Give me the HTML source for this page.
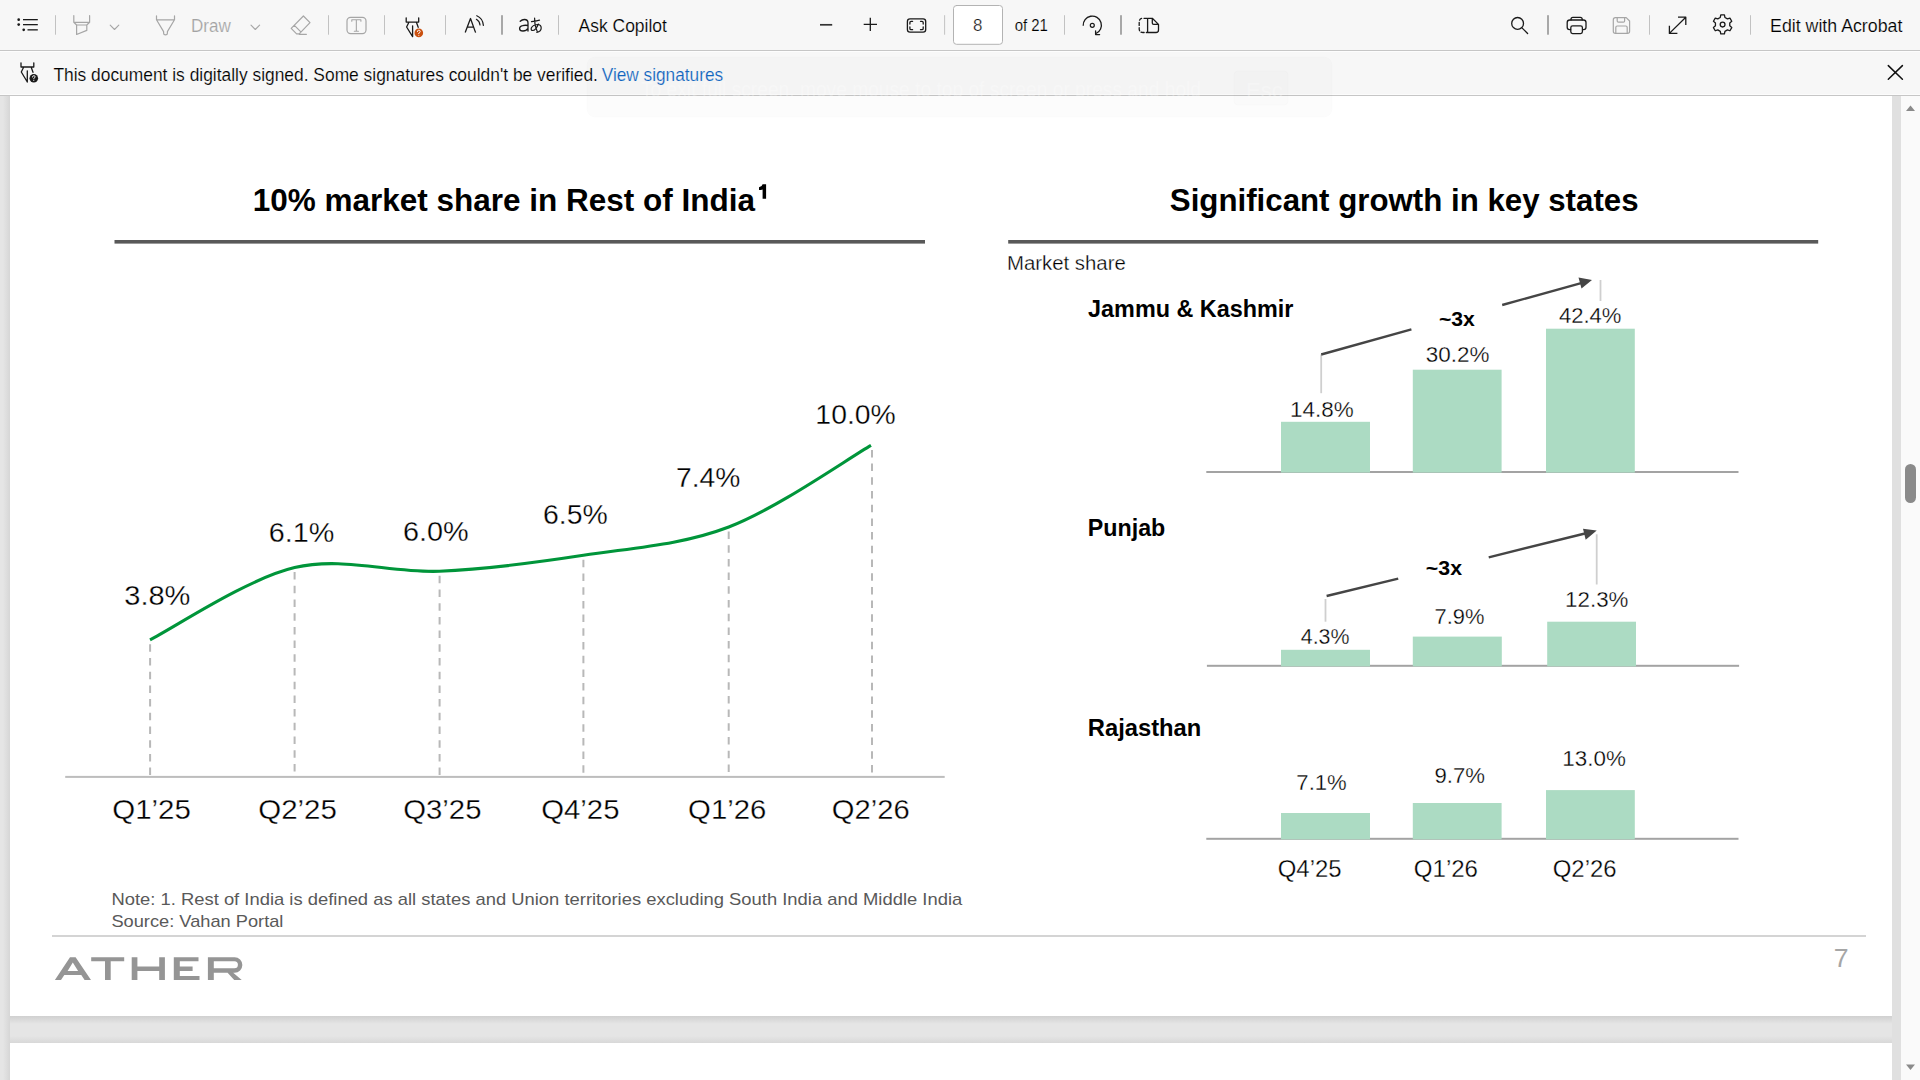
<!DOCTYPE html>
<html><head><meta charset="utf-8"><style>
html,body{margin:0;padding:0;width:1920px;height:1080px;overflow:hidden;background:#e5e5e5;}
svg{position:absolute;left:0;top:0;font-family:"Liberation Sans",sans-serif;}
</style></head><body>
<svg width="1920" height="1080" viewBox="0 0 1920 1080">
<!-- viewer background -->
<defs>
<linearGradient id="shB" x1="0" y1="0" x2="0" y2="1"><stop offset="0" stop-color="#d0d0d0"/><stop offset="1" stop-color="#e5e5e5"/></linearGradient>
<linearGradient id="shL" x1="1" y1="0" x2="0" y2="0"><stop offset="0" stop-color="#d6d6d6"/><stop offset="1" stop-color="#e5e5e5"/></linearGradient>
<linearGradient id="shR" x1="0" y1="0" x2="1" y2="0"><stop offset="0" stop-color="#d6d6d6"/><stop offset="1" stop-color="#e5e5e5"/></linearGradient>
<linearGradient id="shT" x1="0" y1="1" x2="0" y2="0"><stop offset="0" stop-color="#d8d8d8"/><stop offset="1" stop-color="#e5e5e5"/></linearGradient>
</defs>
<rect x="0" y="0" width="1920" height="1080" fill="#e5e5e5"/>
<rect x="3" y="96" width="7" height="984" fill="url(#shL)"/>
<rect x="1892" y="96" width="9" height="984" fill="#e0e0e0"/>
<rect x="10" y="1016" width="1882" height="8" fill="url(#shB)"/>
<rect x="10" y="1036" width="1882" height="7" fill="url(#shT)"/>
<!-- page 1 -->
<rect x="10" y="96" width="1882" height="920" fill="#fff"/>
<!-- shadow under page -->
<rect x="10" y="1043" width="1882" height="40" fill="#fff"/>
<!-- scrollbar -->
<rect x="1901" y="96" width="19" height="984" fill="#fafafa"/>
<rect x="1905" y="464" width="11" height="39" rx="5.5" fill="#8a8a8a"/>
<path d="M1906,111 L1910.5,105.5 L1915,111 Z" fill="#8a8a8a"/>
<path d="M1906,1064.5 L1910.5,1070 L1915,1064.5 Z" fill="#8a8a8a"/>

<!-- toolbar -->
<rect x="0" y="0" width="1920" height="50" fill="#f7f7f7"/>
<rect x="0" y="50" width="1920" height="1" fill="#c6c6c6"/>
<!-- notification bar -->
<rect x="0" y="51" width="1920" height="44" fill="#f7f7f7"/>
<rect x="0" y="95" width="1920" height="1" fill="#c6c6c6"/>
<rect x="0" y="51" width="1920" height="1" fill="#fdfdfd"/>
<rect x="0" y="94" width="1920" height="1" fill="#fcfcfc"/>

<g>
<rect x="587" y="57" width="745" height="60" rx="8" fill="#000" fill-opacity="0.012" stroke="#000" stroke-opacity="0.012"/>
<text x="641" y="97" font-size="22" fill="#fff" fill-opacity="0.28" textLength="560" lengthAdjust="spacingAndGlyphs">To exit full screen, move mouse to top of screen or press and hold</text>
<rect x="1234" y="71" width="54" height="34" rx="4" fill="#000" fill-opacity="0.006" stroke="#000" stroke-opacity="0.012"/>
<text x="1246" y="98" font-size="22" fill="#fff" fill-opacity="0.28">Esc</text>
</g>
<!-- slide titles and lines -->
<rect x="114.5" y="240" width="810.5" height="3.6" fill="#595959"/>
<rect x="1008.2" y="240" width="810" height="3.6" fill="#595959"/>
<!-- left chart -->
<g stroke="#b8b8b8" stroke-width="2" stroke-dasharray="7.5 6.2" fill="none"><line x1="150.1" y1="644.3" x2="150.1" y2="776" /><line x1="294.6" y1="572.1" x2="294.6" y2="776" /><line x1="439.6" y1="575.8" x2="439.6" y2="776" /><line x1="583.4" y1="559.8" x2="583.4" y2="776" /><line x1="728.7" y1="531.5" x2="728.7" y2="776" /><line x1="872" y1="449.9" x2="872" y2="776" /></g>
<rect x="65.2" y="775.9" width="879.5" height="2" fill="#bdbdbd"/>
<path d="M150,639.8 C174.1,627.8 246.4,579.0 294.6,567.6 C342.9,556.2 391.4,573.3 439.5,571.3 C487.6,569.2 535.2,562.7 583.4,555.3 C631.6,547.9 680.9,545.3 728.8,527 C776.7,508.7 847.3,459.0 871,445.4" fill="none" stroke="#00953a" stroke-width="3.1" />
<!-- bars -->
<rect x="1206.3" y="471" width="532.2" height="2" fill="#a3a3a3"/>
<rect x="1206.9" y="664.8" width="532.2" height="2" fill="#a3a3a3"/>
<rect x="1206.3" y="837.8" width="532.2" height="2" fill="#a3a3a3"/>
<g fill="#acdbc3"><rect x="1281" y="421.8" width="89" height="50.80000000000001" /><rect x="1412.8" y="369.7" width="88.79999999999995" height="102.90000000000003" /><rect x="1546" y="328.7" width="88.79999999999995" height="143.90000000000003" /><rect x="1281" y="649.8" width="89" height="16.600000000000023" /><rect x="1412.8" y="636.6" width="89.0" height="29.799999999999955" /><rect x="1547.2" y="621.7" width="88.79999999999995" height="44.69999999999993" /><rect x="1281" y="813" width="89" height="26.399999999999977" /><rect x="1412.8" y="803" width="88.79999999999995" height="36.39999999999998" /><rect x="1546" y="790.1" width="88.79999999999995" height="49.299999999999955" /></g>
<!-- arrows -->
<g stroke="#cfcfcf" stroke-width="1.8">
<line x1="1321.2" y1="354.5" x2="1321.2" y2="393.2"/>
<line x1="1600.5" y1="280" x2="1600.5" y2="301"/>
<line x1="1325.5" y1="599" x2="1325.5" y2="621.7"/>
<line x1="1596.7" y1="534.3" x2="1596.7" y2="584.5"/>
</g>
<g stroke="#454545" stroke-width="2.4" fill="none">
<line x1="1321.2" y1="354.5" x2="1411.4" y2="329.3"/>
<line x1="1502.2" y1="305" x2="1582" y2="282.8"/>
<line x1="1326.6" y1="596" x2="1398.2" y2="578.7"/>
<line x1="1488.7" y1="557.3" x2="1587" y2="533"/>
</g>
<g fill="#454545">
<path d="M1592,280 L1578.5,277.6 L1581.5,288.4 Z"/>
<path d="M1596.7,530.6 L1583,528.8 L1585.7,539.7 Z"/>
</g>
<!-- footer -->
<rect x="52" y="935" width="1814" height="2" fill="#d4d4d4"/>
<g fill="#959595"><path d="M70,957.2 H75.6 L91,980.1 H84.6 L81.3,975 H64.3 L61,980.1 H54.9 Z M72.8,962.6 L67.6,970.9 H78.1 Z" fill-rule="evenodd"/><path d="M91.2,957.2 H124.2 V961.3 H110.7 V980.1 H105 V961.3 H91.2 Z"/><path d="M131.7,957.2 H137.4 V966.4 H159.2 V957.2 H164.9 V980.1 H159.2 V970.9 H137.4 V980.1 H131.7 Z"/><path d="M173.8,957.2 H198.5 V961.3 H179.8 V966.4 H192.6 V970.9 H179.8 V976 H199.5 V980.1 H173.8 Z"/><path d="M207.9,957.2 H234.6 A7.75,7.75 0 0 1 234.6,972.7 H233.2 L241.7,980.1 H234.2 L227.6,972.7 H213.8 V980.1 H207.9 Z M213.8,961.3 V968.3 H234.4 A3.5,3.5 0 0 0 234.4,961.3 Z" fill-rule="evenodd"/></g>
<path d="M762.6,184.3 H766.1 V198.7 H762.6 V189.4 Q761,189.9 759,189.9 V187.3 Q762,187 762.6,184.3 Z" fill="#000"/>

<g fill="none" stroke-linecap="round" stroke-linejoin="round">
<!-- list icon -->
<g fill="#1a1a1a" stroke="none">
<circle cx="18.7" cy="19.7" r="1.35"/><circle cx="18.7" cy="24.6" r="1.35"/><circle cx="23.7" cy="29.8" r="1.35"/>
<rect x="23" y="19" width="14.8" height="1.3"/><rect x="23" y="24" width="14.8" height="1.3"/><rect x="27.5" y="29.2" width="10.3" height="1.3"/>
</g>
<rect x="55.0" y="15.2" width="1" height="19.5" fill="#c2c2c2"/>
<!-- highlighter (disabled) -->
<path d="M73.8,15.5 V22.3 L76.6,25 V34.5 L86.8,30.4 V25 L89.6,22.3 V15.5 M74,22.3 H89.4 M76.6,25 H86.8" stroke="#a6a6a6" stroke-width="1.2"/>
<path d="M110.2,25.2 L114.5,29.5 L118.8,25.2" stroke="#a6a6a6" stroke-width="1.1"/>
<!-- draw pen (disabled) -->
<path d="M156.5,15.8 V19.8 L163.6,31.6 V33.2 Q163.6,34.8 165.5,34.8 Q167.4,34.8 167.4,33.2 V31.6 L174.5,19.8 V15.8 M156.5,19.8 H174.5" stroke="#a6a6a6" stroke-width="1.2"/>
<path d="M251,25.2 L255.3,29.5 L259.6,25.2" stroke="#a6a6a6" stroke-width="1.1"/>
<!-- eraser (disabled) -->
<path d="M303.4,16 L310,22.6 L299.2,33.8 L296.6,33.8 L291.2,28.3 Z M294.4,25.4 L300.6,31.6 M299.2,34.3 H306.4" stroke="#a6a6a6" stroke-width="1.2"/>
<rect x="328.0" y="15.2" width="1" height="19.5" fill="#c2c2c2"/>
<!-- T box (disabled) -->
<rect x="347" y="17.4" width="19" height="16.2" rx="3.6" stroke="#a6a6a6" stroke-width="1.2"/>
<path d="M351.8,21.2 V19.8 H360.9 V21.2 M356.35,19.8 V31.2 M354.3,31.2 H358.4" stroke="#a6a6a6" stroke-width="1.1"/>
<rect x="384.0" y="15.2" width="1" height="19.5" fill="#c2c2c2"/>
<!-- signature pen with orange badge -->
<path d="M406.2,17.8 V22.1 H418.7 V17.8 M408.9,22.3 L406.6,27 L412.6,36.6 M416.4,22.3 L418.2,27.3 M412.6,25.8 V36.6" stroke="#1a1a1a" stroke-width="1.3"/>
<circle cx="418.8" cy="32.9" r="4.3" fill="#ca5010" stroke="none"/>
<path d="M417.4,31.6 Q417.4,30.2 418.8,30.2 Q420.2,30.2 420.2,31.5 Q420.2,32.4 418.8,33 V33.6" stroke="#fff" stroke-width="0.9"/>
<circle cx="418.8" cy="35.2" r="0.55" fill="#fff" stroke="none"/>
<rect x="445.0" y="15.2" width="1" height="19.5" fill="#c2c2c2"/>
<!-- read aloud -->
<path d="M465.2,32.6 L470.5,18.5 L475.6,32.6 M467.3,27.2 H473.8" stroke="#1a1a1a" stroke-width="1.3" stroke-linecap="butt"/>
<path d="M476.4,19.3 Q479.6,21.2 480,25" stroke="#1a1a1a" stroke-width="1.2"/>
<path d="M476.8,15.7 Q482.8,18.2 483.4,25.4" stroke="#1a1a1a" stroke-width="1.2"/>
<rect x="501.0" y="15.2" width="2" height="19.5" fill="#a8a8a8"/>
<!-- a あ -->
<path d="M520.2,21.2 Q522,19.5 524.4,19.5 Q528,19.5 528,23 V31 M528,25.5 Q525,25 522.6,25.6 Q519.6,26.2 519.6,28.4 Q519.6,31 523,31 Q526.3,31 528,28.3" stroke="#1a1a1a" stroke-width="1.3"/>
<path d="M531.5,21.6 Q535.5,21.3 539.5,20.2 M534.6,18.2 Q534.2,25 537.2,31.5 M538.4,24 Q535.8,30.5 532.8,30.5 Q530.6,30.5 531.3,28 Q532.5,25 537.5,24.5 Q541.2,24.5 541.2,28 Q541.2,31.5 536.8,32.4" stroke="#1a1a1a" stroke-width="1.2"/>
<rect x="558.0" y="15.2" width="1" height="19.5" fill="#c2c2c2"/>
<!-- zoom minus / plus -->
<path d="M820,24.8 H832.2" stroke="#333" stroke-width="1.7" stroke-linecap="butt"/>
<path d="M863.7,24.3 H877 M870.3,17.8 V30.9" stroke="#1a1a1a" stroke-width="1.3" stroke-linecap="butt"/>
<!-- fit -->
<rect x="907.4" y="18.8" width="18.3" height="13.4" rx="2.6" stroke="#1a1a1a" stroke-width="1.3"/>
<path d="M909.9,24 V22.5 Q909.9,21.3 911.1,21.3 H912.6 M920.5,21.3 H922 Q923.2,21.3 923.2,22.5 V24 M923.2,27 V28.5 Q923.2,29.7 922,29.7 H920.5 M912.6,29.7 H911.1 Q909.9,29.7 909.9,28.5 V27" stroke="#1a1a1a" stroke-width="1.3"/>
<rect x="944.1" y="15.2" width="1" height="19.5" fill="#c2c2c2"/>
<!-- page box -->
<rect x="953.5" y="5.5" width="49" height="38.8" rx="3" fill="#fff" stroke="#b3b3b3" stroke-width="1"/>
<rect x="1064.0" y="15.2" width="1" height="19.5" fill="#c2c2c2"/>
<!-- rotate -->
<path d="M1083.2,25.8 A9.1,9.1 0 1 1 1096,33.5" stroke="#1a1a1a" stroke-width="1.3" stroke-linecap="butt"/>
<path d="M1095.6,30.8 V34.6 H1099.6" stroke="#1a1a1a" stroke-width="1.3"/>
<circle cx="1092.3" cy="25.3" r="2" stroke="#1a1a1a" stroke-width="1.2"/>
<rect x="1120.0" y="15.2" width="2" height="19.5" fill="#a8a8a8"/>
<!-- page view -->
<path d="M1147,18.3 H1143 Q1139.2,18.3 1139.2,22 V28.8 Q1139.2,32.5 1143,32.5 H1147" stroke="#1a1a1a" stroke-width="1.3" stroke-dasharray="3 2.2"/>
<path d="M1147.6,18.3 H1152.3 L1158.5,24.4 V30 Q1158.5,32.5 1156,32.5 H1147.6 Z M1152.3,18.6 V23 Q1152.3,24.4 1153.7,24.4 H1158.2" stroke="#1a1a1a" stroke-width="1.3"/>
<!-- search -->
<circle cx="1517.6" cy="23.4" r="5.9" stroke="#1a1a1a" stroke-width="1.3"/>
<path d="M1522,27.9 L1527.6,33.5" stroke="#1a1a1a" stroke-width="1.3"/>
<rect x="1547.0" y="15.2" width="2" height="19.5" fill="#a8a8a8"/>
<!-- print -->
<path d="M1571,20 V19.3 Q1571,17.4 1572.9,17.4 H1580.3 Q1582.2,17.4 1582.2,19.3 V20" stroke="#1a1a1a" stroke-width="1.3"/>
<path d="M1570.6,29.6 H1569.5 Q1567.2,29.6 1567.2,27.3 V22.6 Q1567.2,20 1569.8,20 H1583.4 Q1586,20 1586,22.6 V27.3 Q1586,29.6 1583.7,29.6 H1582.6" stroke="#1a1a1a" stroke-width="1.3"/>
<rect x="1570.8" y="25.9" width="11.6" height="7.7" rx="1.8" stroke="#1a1a1a" stroke-width="1.3"/>
<!-- save disabled -->
<path d="M1615.4,17.6 H1626.2 L1629.6,21 V31.3 Q1629.6,33.4 1627.5,33.4 H1615.4 Q1613.3,33.4 1613.3,31.3 V19.7 Q1613.3,17.6 1615.4,17.6 Z" stroke="#a6a6a6" stroke-width="1.2"/>
<path d="M1617.2,17.8 V21 Q1617.2,22.2 1618.4,22.2 H1623.4 Q1624.6,22.2 1624.6,21 V17.8 M1615.8,33.2 V27.4 Q1615.8,26 1617.2,26 H1625.8 Q1627.2,26 1627.2,27.4 V33.2" stroke="#a6a6a6" stroke-width="1.2"/>
<rect x="1649.0" y="15.2" width="1" height="19.5" fill="#c2c2c2"/>
<!-- expand -->
<path d="M1669.4,33.4 L1685.8,17.2 M1678,17.2 H1685.8 V25 M1669.4,25.8 V33.4 H1677.4" stroke="#1a1a1a" stroke-width="1.3" stroke-linecap="butt"/>
<!-- gear -->
<path d="M1720.27,17.48 L1720.78,14.87 L1724.42,14.87 L1724.93,17.48 L1727.43,18.92 L1729.94,18.06 L1731.76,21.21 L1729.76,22.96 L1729.76,25.84 L1731.76,27.59 L1729.94,30.74 L1727.43,29.88 L1724.93,31.32 L1724.42,33.93 L1720.78,33.93 L1720.27,31.32 L1717.77,29.88 L1715.26,30.74 L1713.44,27.59 L1715.44,25.84 L1715.44,22.96 L1713.44,21.21 L1715.26,18.06 L1717.77,18.92Z" stroke="#1a1a1a" stroke-width="1.3"/>
<circle cx="1722.6" cy="24.6" r="2.4" stroke="#1a1a1a" stroke-width="1.3"/>
<rect x="1750.0" y="15.2" width="1" height="19.5" fill="#c2c2c2"/>
<!-- notification icon -->
<path d="M21,62.8 V67 H33.8 V62.8 M23.6,67.2 L21.3,72 L27.3,82 M31.2,67.2 L33,72.3 M27.3,70.8 V82" stroke="#1a1a1a" stroke-width="1.3"/>
<circle cx="33.8" cy="78.2" r="4.3" fill="#1a1a1a" stroke="none"/>
<path d="M32.5,77 Q32.5,75.6 33.8,75.6 Q35.1,75.6 35.1,76.9 Q35.1,77.7 33.8,78.3 V78.9" stroke="#fff" stroke-width="0.9"/>
<circle cx="33.8" cy="80.5" r="0.55" fill="#fff" stroke="none"/>
<!-- close X -->
<path d="M1888.3,65.6 L1902.4,79.3 M1902.4,65.6 L1888.3,79.3" stroke="#111" stroke-width="1.5"/>
</g>

<text x="190.90" y="31.8" font-size="19" font-weight="400" fill="#a3a3a3" stroke="#f7f7f7" stroke-width="0.18" textLength="39.81" lengthAdjust="spacingAndGlyphs">Draw</text>
<text x="578.60" y="31.9" font-size="19" font-weight="400" fill="#000" stroke="#f7f7f7" stroke-width="0.18" textLength="88.30" lengthAdjust="spacingAndGlyphs">Ask Copilot</text>
<text x="973.04" y="31" font-size="16" font-weight="400" fill="#1a1a1a" stroke="#fff" stroke-width="0.22" textLength="9.42" lengthAdjust="spacingAndGlyphs">8</text>
<text x="1014.66" y="31" font-size="16" font-weight="400" fill="#000" stroke="#f7f7f7" stroke-width="0.18" textLength="33.29" lengthAdjust="spacingAndGlyphs">of 21</text>
<text x="1770.07" y="32.3" font-size="19" font-weight="400" fill="#000" stroke="#f7f7f7" stroke-width="0.18" textLength="132.30" lengthAdjust="spacingAndGlyphs">Edit with Acrobat</text>
<text x="53.40" y="80.6" font-size="19" font-weight="400" fill="#000" stroke="#f7f7f7" stroke-width="0.18" textLength="544.57" lengthAdjust="spacingAndGlyphs">This document is digitally signed. Some signatures couldn't be verified.</text>
<text x="601.70" y="80.6" font-size="19" font-weight="400" fill="#1064be" stroke="#f7f7f7" stroke-width="0.18" textLength="121.41" lengthAdjust="spacingAndGlyphs">View signatures</text>
<text x="252.63" y="210.9" font-size="32" font-weight="700" fill="#000" textLength="502.38" lengthAdjust="spacingAndGlyphs">10% market share in Rest of India</text>
<text x="1169.82" y="211.2" font-size="32" font-weight="700" fill="#000" textLength="468.74" lengthAdjust="spacingAndGlyphs">Significant growth in key states</text>
<text x="124.26" y="604.9" font-size="28" font-weight="400" fill="#000" stroke="#fff" stroke-width="0.3" textLength="66.20" lengthAdjust="spacingAndGlyphs">3.8%</text>
<text x="268.77" y="541.6" font-size="28" font-weight="400" fill="#000" stroke="#fff" stroke-width="0.3" textLength="65.58" lengthAdjust="spacingAndGlyphs">6.1%</text>
<text x="402.97" y="540.9" font-size="28" font-weight="400" fill="#000" stroke="#fff" stroke-width="0.3" textLength="65.68" lengthAdjust="spacingAndGlyphs">6.0%</text>
<text x="542.99" y="524" font-size="28" font-weight="400" fill="#000" stroke="#fff" stroke-width="0.3" textLength="64.75" lengthAdjust="spacingAndGlyphs">6.5%</text>
<text x="675.99" y="486.8" font-size="28" font-weight="400" fill="#000" stroke="#fff" stroke-width="0.3" textLength="64.34" lengthAdjust="spacingAndGlyphs">7.4%</text>
<text x="815.38" y="423.8" font-size="28" font-weight="400" fill="#000" stroke="#fff" stroke-width="0.3" textLength="80.33" lengthAdjust="spacingAndGlyphs">10.0%</text>
<text x="112.23" y="818.6" font-size="27.5" font-weight="400" fill="#000" stroke="#fff" stroke-width="0.3" textLength="78.66" lengthAdjust="spacingAndGlyphs">Q1’25</text>
<text x="258.23" y="818.6" font-size="27.5" font-weight="400" fill="#000" stroke="#fff" stroke-width="0.3" textLength="78.66" lengthAdjust="spacingAndGlyphs">Q2’25</text>
<text x="403.23" y="818.6" font-size="27.5" font-weight="400" fill="#000" stroke="#fff" stroke-width="0.3" textLength="78.25" lengthAdjust="spacingAndGlyphs">Q3’25</text>
<text x="541.23" y="818.6" font-size="27.5" font-weight="400" fill="#000" stroke="#fff" stroke-width="0.3" textLength="78.25" lengthAdjust="spacingAndGlyphs">Q4’25</text>
<text x="688.13" y="818.6" font-size="27.5" font-weight="400" fill="#000" stroke="#fff" stroke-width="0.3" textLength="78.25" lengthAdjust="spacingAndGlyphs">Q1’26</text>
<text x="831.84" y="818.6" font-size="27.5" font-weight="400" fill="#000" stroke="#fff" stroke-width="0.3" textLength="77.94" lengthAdjust="spacingAndGlyphs">Q2’26</text>
<text x="1006.96" y="270" font-size="20" font-weight="400" fill="#000" stroke="#fff" stroke-width="0.3" textLength="118.87" lengthAdjust="spacingAndGlyphs">Market share</text>
<text x="1088.10" y="317.2" font-size="23.5" font-weight="700" fill="#000" textLength="205.36" lengthAdjust="spacingAndGlyphs">Jammu &amp; Kashmir</text>
<text x="1087.81" y="535.6" font-size="23.5" font-weight="700" fill="#000" textLength="77.53" lengthAdjust="spacingAndGlyphs">Punjab</text>
<text x="1087.79" y="736.3" font-size="23.5" font-weight="700" fill="#000" textLength="113.55" lengthAdjust="spacingAndGlyphs">Rajasthan</text>
<text x="1290.11" y="417" font-size="21.5" font-weight="400" fill="#000" stroke="#fff" stroke-width="0.3" textLength="63.60" lengthAdjust="spacingAndGlyphs">14.8%</text>
<text x="1425.86" y="362.2" font-size="21.5" font-weight="400" fill="#000" stroke="#fff" stroke-width="0.3" textLength="63.66" lengthAdjust="spacingAndGlyphs">30.2%</text>
<text x="1558.90" y="323" font-size="21.5" font-weight="400" fill="#000" stroke="#fff" stroke-width="0.3" textLength="62.59" lengthAdjust="spacingAndGlyphs">42.4%</text>
<text x="1300.80" y="643.8" font-size="21.5" font-weight="400" fill="#000" stroke="#fff" stroke-width="0.3" textLength="48.72" lengthAdjust="spacingAndGlyphs">4.3%</text>
<text x="1434.48" y="624" font-size="21.5" font-weight="400" fill="#000" stroke="#fff" stroke-width="0.3" textLength="49.93" lengthAdjust="spacingAndGlyphs">7.9%</text>
<text x="1565.12" y="607.4" font-size="21.5" font-weight="400" fill="#000" stroke="#fff" stroke-width="0.3" textLength="63.28" lengthAdjust="spacingAndGlyphs">12.3%</text>
<text x="1296.37" y="790.1" font-size="21.5" font-weight="400" fill="#000" stroke="#fff" stroke-width="0.3" textLength="50.34" lengthAdjust="spacingAndGlyphs">7.1%</text>
<text x="1434.47" y="783" font-size="21.5" font-weight="400" fill="#000" stroke="#fff" stroke-width="0.3" textLength="50.55" lengthAdjust="spacingAndGlyphs">9.7%</text>
<text x="1562.32" y="766.4" font-size="21.5" font-weight="400" fill="#000" stroke="#fff" stroke-width="0.3" textLength="63.49" lengthAdjust="spacingAndGlyphs">13.0%</text>
<text x="1438.97" y="325.9" font-size="20.5" font-weight="700" fill="#000" textLength="35.94" lengthAdjust="spacingAndGlyphs">~3x</text>
<text x="1425.86" y="575.3" font-size="20.5" font-weight="700" fill="#000" textLength="36.15" lengthAdjust="spacingAndGlyphs">~3x</text>
<text x="1277.78" y="876.9" font-size="23.5" font-weight="400" fill="#000" stroke="#fff" stroke-width="0.3" textLength="63.85" lengthAdjust="spacingAndGlyphs">Q4’25</text>
<text x="1413.78" y="876.9" font-size="23.5" font-weight="400" fill="#000" stroke="#fff" stroke-width="0.3" textLength="64.26" lengthAdjust="spacingAndGlyphs">Q1’26</text>
<text x="1552.78" y="876.9" font-size="23.5" font-weight="400" fill="#000" stroke="#fff" stroke-width="0.3" textLength="63.85" lengthAdjust="spacingAndGlyphs">Q2’26</text>
<text x="111.42" y="904.7" font-size="17" font-weight="400" fill="#595959" textLength="850.85" lengthAdjust="spacingAndGlyphs">Note: 1. Rest of India is defined as all states and Union territories excluding South India and Middle India</text>
<text x="111.43" y="926.6" font-size="17" font-weight="400" fill="#595959" textLength="172.01" lengthAdjust="spacingAndGlyphs">Source: Vahan Portal</text>
<text x="1833.68" y="966.7" font-size="26" font-weight="400" fill="#a6a6a6" textLength="14.83" lengthAdjust="spacingAndGlyphs">7</text>
</svg>
</body></html>
